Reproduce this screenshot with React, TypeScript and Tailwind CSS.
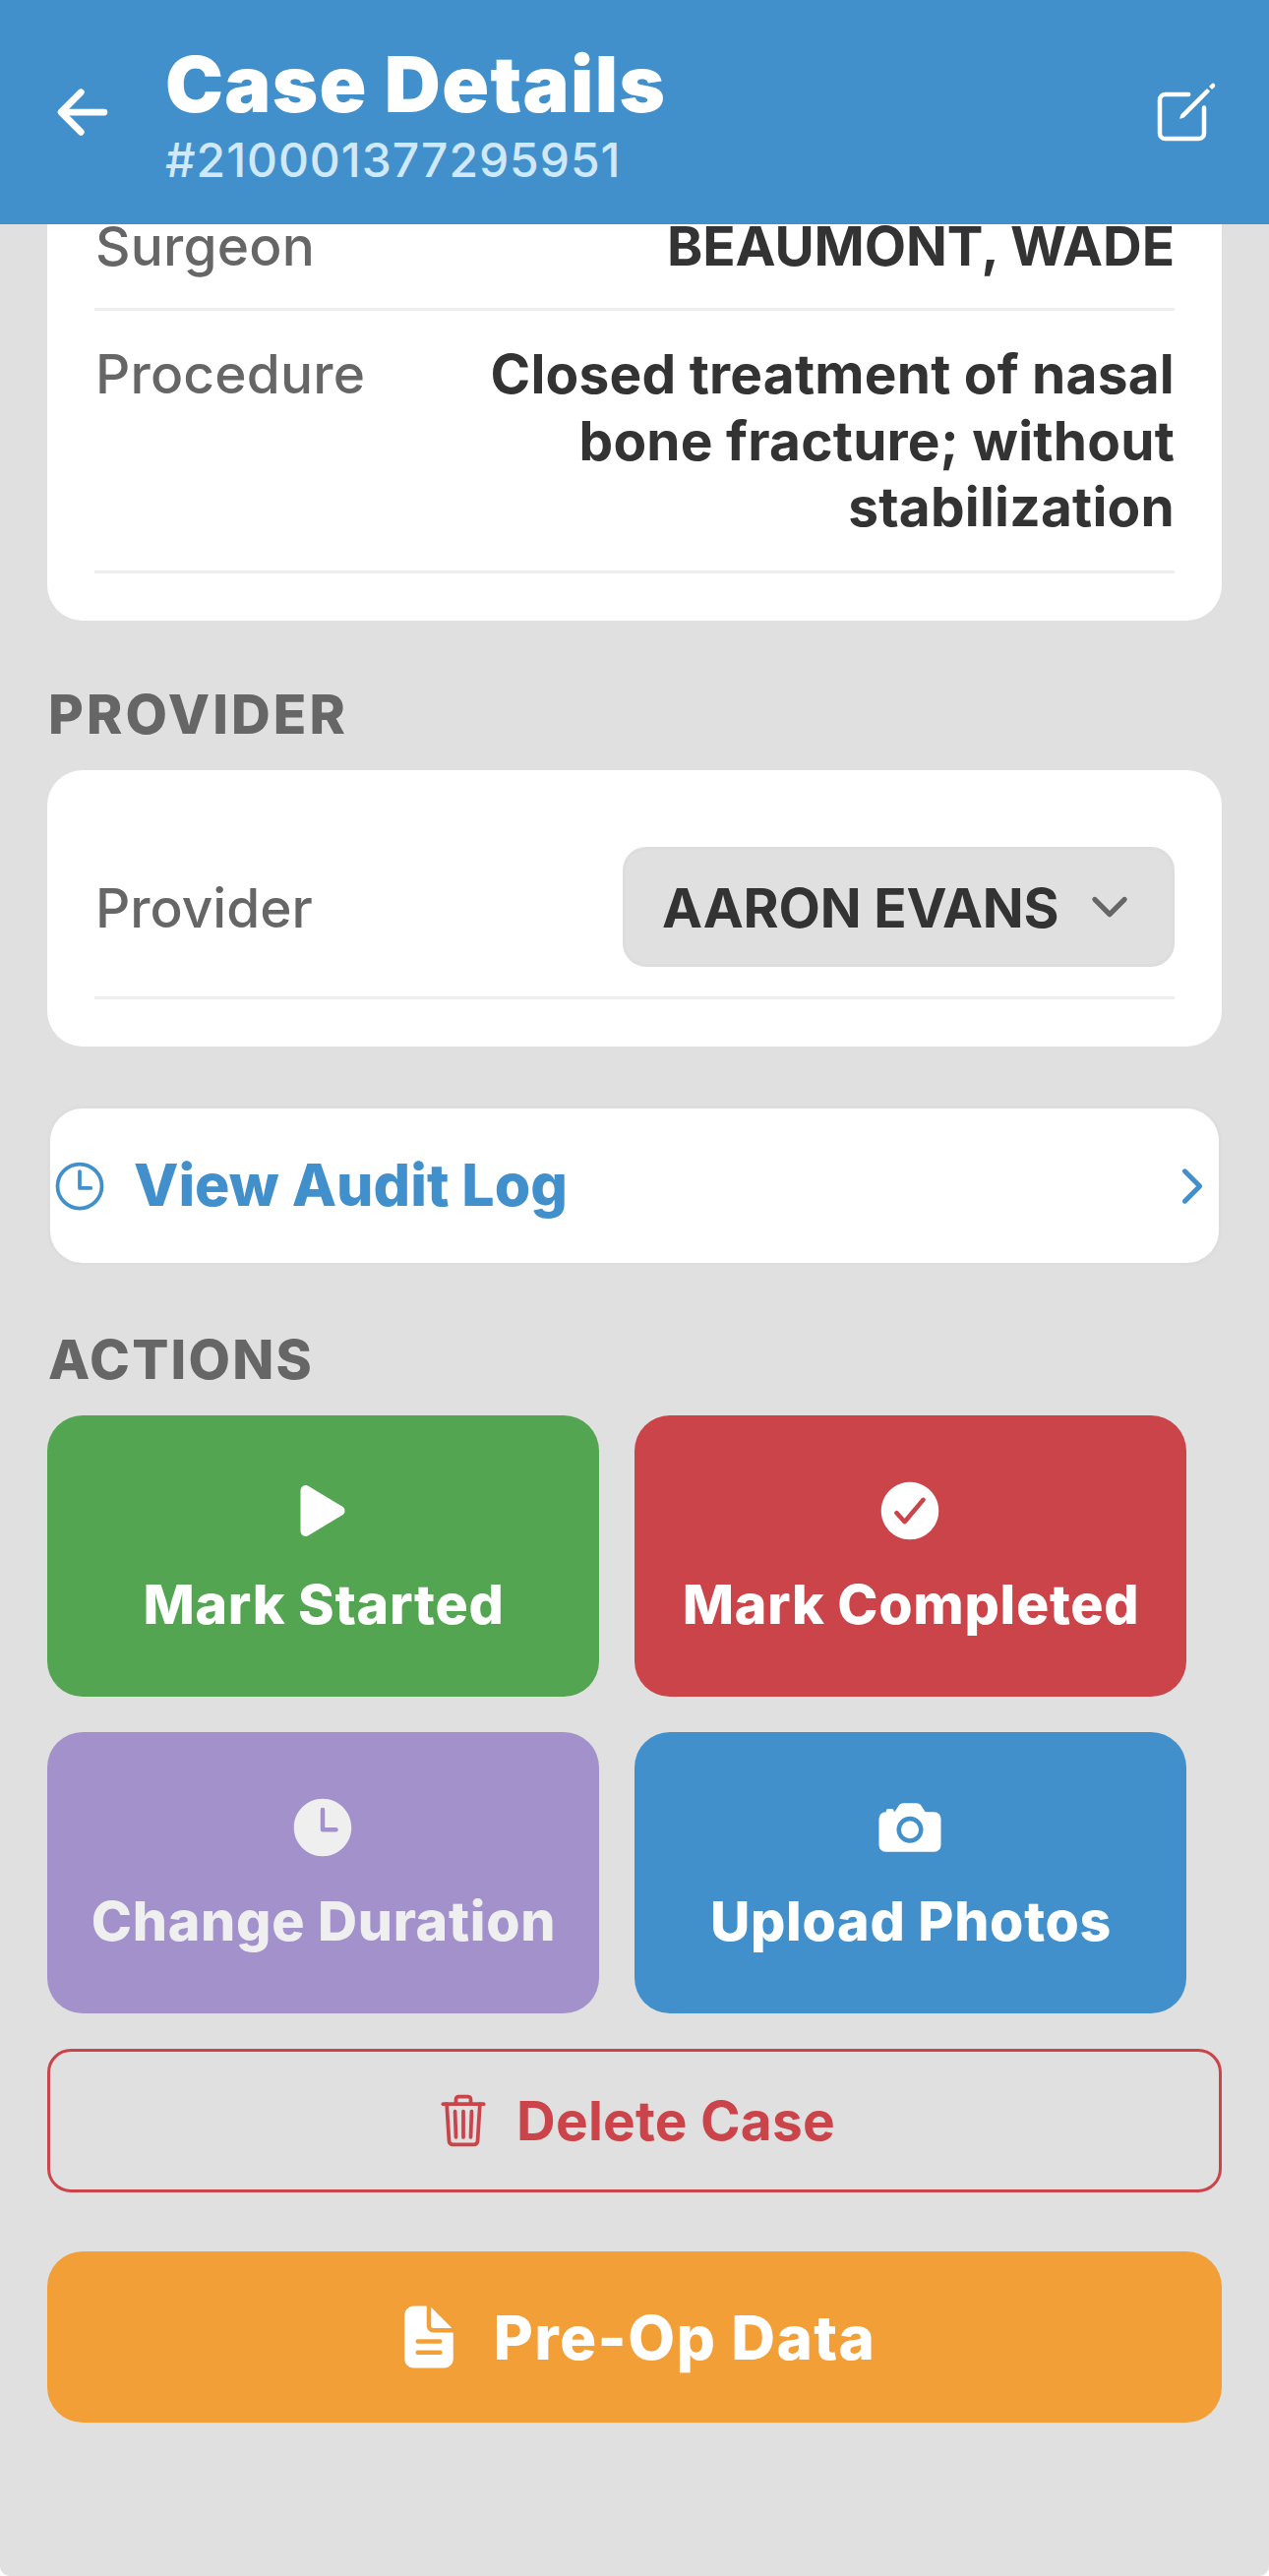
import type { IconType } from "react-icons";
import {
  IoArrowBack,
  IoCamera,
  IoCheckmarkCircle,
  IoChevronDown,
  IoChevronForward,
  IoCreateOutline,
  IoDocumentText,
  IoPlay,
  IoTime,
  IoTimeOutline,
  IoTrashOutline,
} from "react-icons/io5";

type Action = {
  label: string;
  icon: IconType;
  color: string;
};

const actions: Action[] = [
  { label: "Mark Started", icon: IoPlay, color: "bg-[#54a551] text-white" },
  { label: "Mark Completed", icon: IoCheckmarkCircle, color: "bg-[#ca444a] text-white" },
  { label: "Change Duration", icon: IoTime, color: "bg-[#a391cb] text-[#efeff0]" },
  { label: "Upload Photos", icon: IoCamera, color: "bg-[#4190cc] text-white" },
];

const SectionTitle: React.FC<{ title: string; className: string }> = ({ title, className }) => (
  <h2 className={`mt-[65px] mb-[27px] pl-px text-[55px] leading-[60px] font-extrabold text-[#666] ${className}`}>
    {title}
  </h2>
);

const ActionCard: React.FC<{ action: Action }> = ({ action }) => {
  const Icon = action.icon;
  return (
    <button className={`flex h-[286px] w-[561px] flex-col items-center rounded-[36px] pt-[61px] ${action.color}`}>
      <Icon size={72} className="mr-[2px]" />
      <span className="mt-[26px] ml-px text-[55.5px] leading-[66px] font-extrabold tracking-[0.68px] whitespace-nowrap">
        {action.label}
      </span>
    </button>
  );
};

const App: React.FC = () => {
  return (
    <div className="bg-white font-[Inter,sans-serif]">
      <main className="h-[2619px] overflow-hidden rounded-b-[10px] bg-[#e0e0e0]">
        {/* header */}
        <header className="flex h-[228px] items-center bg-[#4190cc] px-12 text-white">
          <IoArrowBack size={72} />
          <div className="ml-12 flex-1 pt-px">
            <h1 className="text-[79px] leading-[96px] font-black tracking-[1.3px]">Case Details</h1>
            <p className="text-[48px] leading-[60px] font-medium tracking-[0.95px] text-[#cfe8fa]">#210001377295951</p>
          </div>
          <IoCreateOutline size={72} />
        </header>

        <div className="px-12">
          {/* case info */}
          <section className="rounded-b-[36px] bg-white px-12 pb-12 text-[55px]">
            <div className="flex justify-between border-b-[3px] border-[#eee] pb-[41px] leading-[44px]">
              <span className="pl-px font-medium tracking-[0.2px] text-[#666]">Surgeon</span>
              <span className="font-bold tracking-[-0.1px] text-[#333]">BEAUMONT, WADE</span>
            </div>
            <div className="flex h-[267px] justify-between border-b-[3px] border-[#eee] pt-[31px] leading-[67.5px]">
              <span className="pl-px font-medium tracking-[0.2px] text-[#666]">Procedure</span>
              <span className="w-[720px] text-right font-bold tracking-[0.22px] text-[#333]">
                Closed treatment of nasal bone fracture; without stabilization
              </span>
            </div>
          </section>

          <SectionTitle title="PROVIDER" className="tracking-[3.1px]" />
          <section className="rounded-[36px] bg-white px-12 pt-[78px] pb-12 text-[55px] leading-[66px]">
            <div className="flex items-center justify-between border-b-[3px] border-[#eee] pb-[30px]">
              <span className="pt-[2px] pl-px font-medium text-[#666]">Provider</span>
              <button className="flex h-[122px] w-[561px] items-center justify-between rounded-[24px] border-[3px] border-[#ddd] bg-[#e0e0e0] pr-[36px] pl-[37px] text-[#333]">
                <span className="pt-px font-bold tracking-[-0.2px]">AARON EVANS</span>
                <IoChevronDown size={54} className="text-[#666]" />
              </button>
            </div>
          </section>

          {/* audit log */}
          <button className="mt-[60px] flex h-[163px] w-full items-center rounded-[36px] border-[3px] border-[#ddd] bg-white text-[#4190cc]">
            <IoTimeOutline size={60} />
            <span className="ml-[25px] flex-1 text-left text-[59px] font-extrabold">View Audit Log</span>
            <IoChevronForward size={54} />
          </button>

          <SectionTitle title="ACTIONS" className="tracking-[2.2px]" />
          <div className="flex flex-wrap gap-9">
            {actions.map((action) => (
              <ActionCard key={action.label} action={action} />
            ))}
          </div>

          <button className="mt-9 flex h-[146px] w-full items-center justify-center gap-6 rounded-[24px] border-[3px] border-[#ca444a] text-[#ca444a]">
            <IoTrashOutline size={60} />
            <span className="text-[55px] font-bold tracking-[0.2px]">Delete Case</span>
          </button>

          <button className="mt-[60px] flex h-[174px] w-full items-center justify-center gap-[30px] rounded-[36px] bg-[#f29f38] text-white">
            <IoDocumentText size={72} />
            <span className="text-[62px] font-extrabold tracking-[1.35px]">Pre-Op Data</span>
          </button>
        </div>
      </main>
    </div>
  );
};

export default App;
